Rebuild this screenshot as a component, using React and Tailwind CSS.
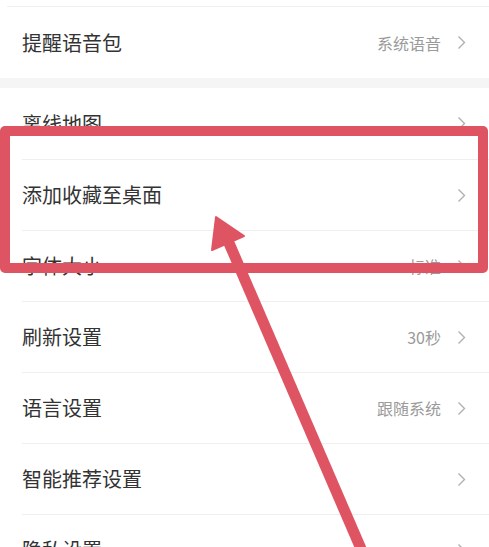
import React from 'react'

const FONT = { fontFamily: '"Noto Sans CJK SC", "Noto Sans", sans-serif' }

const ROWS_TOP = [{ label: '提醒语音包', value: '系统语音' }]
const ROWS = [
  { label: '离线地图', value: '' },
  { label: '添加收藏至桌面', value: '' },
  { label: '字体大小', value: '标准' },
  { label: '刷新设置', value: '30秒' },
  { label: '语言设置', value: '跟随系统' },
  { label: '智能推荐设置', value: '' },
  { label: '隐私设置', value: '' },
]

function Chevron() {
  return (
    <svg width="9" height="15" viewBox="0 0 9 15" className="ml-4 shrink-0">
      <path d="M1.5 1.5 L7.5 7.5 L1.5 13.5" fill="none" stroke="#b0b0b0" strokeWidth="1.4" />
    </svg>
  )
}

function Row({ label, value, first }) {
  return (
    <div className="h-[71px] pl-[22px] bg-white">
      <div className={`h-full flex items-center pr-[23px] ${first ? '' : 'border-t border-[#efefef]'}`}>
        <span className="text-[20px] text-[#333] flex-1">{label}</span>
        {value && <span className="text-[16px] text-[#9a9a9a]">{value}</span>}
        <Chevron />
      </div>
    </div>
  )
}

export default function App() {
  return (
    <div className="relative w-[489px] h-[547px] overflow-hidden bg-white" style={FONT}>
      <div className="h-[7px] pl-[7px] bg-white">
        <div className="h-full border-b border-[#f0f0f0]" />
      </div>
      {ROWS_TOP.map(r => <Row key={r.label} {...r} first />)}
      <div className="h-[10px] bg-[#f5f5f5]" />
      {ROWS.map((r, i) => <Row key={r.label} {...r} first={i === 0} />)}

      {/* red highlight box */}
      <div className="absolute left-0 top-[126px] w-[488px] h-[147px] border-[10px] border-[#df5463] rounded-[5px]" />

      {/* arrow */}
      <svg className="absolute inset-0" width="489" height="547" viewBox="0 0 489 547">
        <line x1="229" y1="243" x2="368" y2="565" stroke="#df5463" strokeWidth="11" />
        <polygon points="216,217 212,250 244,236" fill="#df5463" stroke="#df5463" strokeWidth="2" strokeLinejoin="round" />
      </svg>
    </div>
  )
}
